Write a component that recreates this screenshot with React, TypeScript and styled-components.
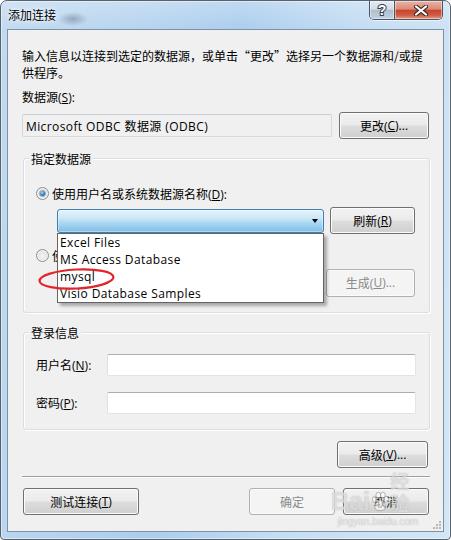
import React from "react";
import styled, { createGlobalStyle } from "styled-components";

const UI = `"Open Sans", "Noto Sans CJK SC", sans-serif`;
const CJK = `"Noto Sans CJK SC", sans-serif`;

const GlobalStyle = createGlobalStyle`
  html, body { margin: 0; padding: 0; background: #ffffff; }
  body { font-family: ${UI}; font-size: 12px; }
  *, *::before, *::after { box-sizing: border-box; }
`;

const Window = styled.div`
  position: relative;
  width: 451px;
  height: 540px;
  display: flex;
  flex-direction: column;
  border: 1px solid #56626e;
  border-radius: 7px 7px 4px 4px;
  overflow: hidden;
  font-family: ${UI};
  font-size: 12px;
  color: #000;
  box-shadow: inset 0 0 0 1px rgba(255, 255, 255, 0.45);
  background:
    radial-gradient(ellipse 15px 7px at 72px 18px, rgba(55, 65, 80, 0.33), rgba(55, 65, 80, 0) 100%),
    linear-gradient(to bottom, rgba(255, 255, 255, 0.25), rgba(255, 255, 255, 0) 30px),
    linear-gradient(100deg, #c2daf0 0%, #b5d3ef 28%, #abcdee 45%, #c6def3 70%, #d2e6f6 100%);
`;

const TitleBar = styled.div`
  height: 28px;
  flex-shrink: 0;
  display: flex;
  align-items: flex-start;
`;

const TitleText = styled.div`
  flex: 1;
  margin-left: 7px;
  line-height: 27px;
  font-family: ${CJK};
  font-size: 12px;
  color: #000;
  text-shadow: 0 0 6px #fff, 0 0 3px rgba(255, 255, 255, 0.9);
`;

const CaptionGroup = styled.div`
  display: flex;
  height: 19px;
  margin-right: 7px;
  border: 1px solid #4b5664;
  border-top: none;
  border-radius: 0 0 5px 5px;
  overflow: hidden;
  box-shadow: 0 1px 0 rgba(255, 255, 255, 0.6);
`;

const CaptionButton = styled.div<{ $kind: "help" | "close" }>`
  width: ${(p) => (p.$kind === "help" ? 25 : 47)}px;
  height: 18px;
  display: flex;
  align-items: center;
  justify-content: center;
  border-right: ${(p) => (p.$kind === "help" ? "1px solid #4b5664" : "none")};
  box-shadow: inset 0 0 0 1px rgba(255, 255, 255, 0.45);
  background: ${(p) =>
    p.$kind === "help"
      ? "linear-gradient(to bottom, #e4ebf2 0%, #d3dde8 45%, #aebfd1 52%, #c2d2e2 100%)"
      : "linear-gradient(to bottom, #ebb3a6 0%, #dc8a77 45%, #c5442d 52%, #cf5b42 78%, #e59a84 100%)"};
`;

const Client = styled.div`
  position: relative;
  flex: 1;
  margin: 0 6px 7px 6px;
  border: 1px solid #7f91a5;
  background: #f0f0f0;
  padding: 17px 13px 0 14px;
  display: flex;
  flex-direction: column;
`;

const Description = styled.div`
  font-family: ${CJK};
  font-size: 12px;
  line-height: 17px;
  width: 408px;
`;

const Label = styled.div<{ $mt?: number }>`
  margin-top: ${(p) => p.$mt ?? 0}px;
  line-height: 17px;
  white-space: nowrap;
`;

const SourceRow = styled.div`
  margin-top: 6px;
  display: flex;
  align-items: center;
  gap: 7px;
  height: 27px;
`;

const ReadOnlyBox = styled.div`
  width: 310px;
  height: 23px;
  border: 1px solid #d6d9dd;
  border-top-color: #c9ccd1;
  border-radius: 2px;
  background: #f0f0f0;
  padding-left: 3px;
  display: flex;
  align-items: center;
  white-space: nowrap;
  letter-spacing: 0.4px;
`;

const Btn = styled.button<{ $w: number; $h?: number }>`
  width: ${(p) => p.$w}px;
  height: ${(p) => p.$h ?? 27}px;
  flex-shrink: 0;
  padding: 0;
  margin: 0;
  font-family: ${UI};
  font-size: 12px;
  color: #000;
  border: 1px solid #707070;
  border-radius: 3px;
  background: linear-gradient(to bottom, #f2f2f2 0%, #ebebeb 48%, #dddddd 52%, #cfcfcf 100%);
  box-shadow: inset 0 0 0 1px #fbfbfb;
  display: flex;
  align-items: center;
  justify-content: center;
  white-space: nowrap;
  &:disabled {
    color: #8a8a8a;
    border-color: #adb2b5;
    background: #f4f4f4;
  }
`;

const Group = styled.div<{ $mt: number; $pb: number }>`
  margin: ${(p) => p.$mt}px 0 0 1px;
  border: 1px solid #d5dfe5;
  border-radius: 3px;
  box-shadow: inset 1px 1px 0 #ffffff, 1px 1px 0 #ffffff;
  padding-bottom: ${(p) => p.$pb}px;
  display: flex;
  flex-direction: column;
`;

const GroupTitle = styled.div`
  align-self: flex-start;
  margin: -9px 0 0 5px;
  padding: 0 2px;
  background: #f0f0f0;
  font-family: ${CJK};
  line-height: 17px;
`;

const RadioRow = styled.div<{ $mt: number }>`
  margin-top: ${(p) => p.$mt}px;
  padding-left: 12px;
  height: 17px;
  display: flex;
  align-items: center;
  gap: 3px;
  white-space: nowrap;
`;

const Radio = styled.span<{ $checked?: boolean }>`
  width: 13px;
  height: 13px;
  border-radius: 50%;
  border: 1px solid #8b8e91;
  background: radial-gradient(circle at 50% 55%, #f4f4f4 0%, #e2e2e2 60%, #cfcfcf 100%);
  box-shadow: inset 0 0 0 1px #f6f6f6;
  display: flex;
  align-items: center;
  justify-content: center;
  flex-shrink: 0;
  &::after {
    content: "";
    width: 5px;
    height: 5px;
    border-radius: 50%;
    display: ${(p) => (p.$checked ? "block" : "none")};
    background: radial-gradient(circle at 40% 35%, #b9e2fb 0%, #3a86c4 45%, #12467a 100%);
    box-shadow: 0 0 0 1px rgba(30, 70, 110, 0.35);
  }
`;

const ComboRow = styled.div<{ $mt: number }>`
  margin-top: ${(p) => p.$mt}px;
  padding-left: 33px;
  height: 27px;
  display: flex;
  align-items: center;
  gap: 6px;
`;

const ComboWrap = styled.div`
  position: relative;
  z-index: 5;
`;

const Combo = styled.div`
  width: 267px;
  height: 24px;
  border: 1px solid #3c7fb1;
  border-radius: 3px;
  background: linear-gradient(to bottom, #e4f3fc 0%, #cde9f8 35%, #a9d6f1 60%, #7fbce6 100%);
  box-shadow: inset 0 0 0 1px rgba(255, 255, 255, 0.4);
  display: flex;
  align-items: center;
  justify-content: flex-end;
`;

const ComboArrow = styled.span`
  width: 0;
  height: 0;
  margin-right: 5px;
  margin-top: 1px;
  border-left: 3px solid transparent;
  border-right: 3px solid transparent;
  border-top: 4px solid #000;
`;

const DropList = styled.div`
  position: absolute;
  top: 100%;
  left: 0;
  width: 267px;
  background: #ffffff;
  border: 1px solid #646464;
  box-shadow: 3px 3px 3px rgba(0, 0, 0, 0.3);
  display: flex;
  flex-direction: column;
`;

const DropItem = styled.div`
  height: 17px;
  line-height: 18px;
  padding-left: 2px;
  white-space: nowrap;
  letter-spacing: 0.4px;
`;

const HiddenField = styled.div`
  width: 263px;
  height: 23px;
  border: 1px solid #d6d9dd;
  border-radius: 2px;
  background: #f0f0f0;
`;

const FieldRow = styled.div<{ $mt: number }>`
  margin-top: ${(p) => p.$mt}px;
  padding-left: 12px;
  height: 22px;
  display: flex;
  align-items: center;
`;

const FieldLabel = styled.div`
  width: 71px;
  flex-shrink: 0;
  white-space: nowrap;
  line-height: 17px;
`;

const TextBox = styled.div`
  width: 309px;
  height: 22px;
  border: 1px solid #e2e3ea;
  border-top-color: #abadb3;
  border-left-color: #dbdfe6;
  border-radius: 2px;
  background: #ffffff;
`;

const AdvancedRow = styled.div`
  margin-top: 11px;
  display: flex;
  justify-content: flex-end;
  padding-right: 2px;
`;

const Separator = styled.div`
  margin-top: 8px;
  height: 2px;
  border-top: 1px solid #a0a0a0;
  border-bottom: 1px solid #ffffff;
`;

const BottomRow = styled.div`
  margin-top: 10px;
  padding: 0 1px;
  display: flex;
  justify-content: space-between;
`;

const BottomRight = styled.div`
  display: flex;
  gap: 8px;
`;

const Grip = styled.svg`
  position: absolute;
  right: 1px;
  bottom: 1px;
`;

const Annotation = styled.svg`
  position: absolute;
  left: 35px;
  top: 265px;
  z-index: 20;
  pointer-events: none;
`;

const Watermark = styled.div`
  position: absolute;
  left: 330px;
  top: 488px;
  width: 94px;
  z-index: 20;
  display: flex;
  flex-direction: column;
  align-items: center;
  pointer-events: none;
  color: rgba(255, 255, 255, 0.6);
  text-shadow: 0 0 1px rgba(110, 110, 110, 0.55);
`;

const WmTop = styled.div`
  display: flex;
  align-items: flex-end;
  height: 25px;
`;

const WmLatin = styled.span`
  font-family: "Liberation Sans", sans-serif;
  font-weight: bold;
  font-size: 25px;
  line-height: 25px;
`;

const WmCjk = styled.span`
  font-family: ${CJK};
  font-weight: bold;
  font-size: 19px;
  line-height: 22px;
`;

const WmUrl = styled.div`
  margin-top: 3px;
  font-family: "Liberation Sans", sans-serif;
  font-size: 10px;
  line-height: 10px;
`;

function HelpGlyph() {
  return (
    <svg width="12" height="14" viewBox="0 0 12 14">
      <text
        x="6"
        y="12"
        textAnchor="middle"
        fontFamily="Liberation Sans, sans-serif"
        fontWeight="bold"
        fontSize="14"
        fill="#ffffff"
        stroke="#35404c"
        strokeWidth="2"
        paintOrder="stroke"
      >
        ?
      </text>
    </svg>
  );
}

function CloseGlyph() {
  return (
    <svg width="14" height="11" viewBox="0 0 14 11" style={{ marginLeft: 4 }}>
      <path d="M2 1.5 L12 9.5 M12 1.5 L2 9.5" stroke="#3a2b28" strokeWidth="4.2" strokeLinecap="round" />
      <path d="M2 1.5 L12 9.5 M12 1.5 L2 9.5" stroke="#ffffff" strokeWidth="2.2" strokeLinecap="round" />
    </svg>
  );
}

function Paw() {
  return (
    <svg width="20" height="22" viewBox="0 0 20 22" style={{ margin: "0 1px 1px" }}>
      <g fill="rgba(255,255,255,0.6)" stroke="rgba(110,110,110,0.5)" strokeWidth="1">
        <ellipse cx="4" cy="8" rx="2.6" ry="3.2" />
        <ellipse cx="8" cy="3.5" rx="2.6" ry="3.2" />
        <ellipse cx="13" cy="3.5" rx="2.6" ry="3.2" />
        <ellipse cx="16.5" cy="8" rx="2.6" ry="3.2" />
        <path d="M10 9 C5 9 3 16 5 19 C7 21 13 21 15 19 C17 16 15 9 10 9 Z" />
      </g>
    </svg>
  );
}

export default function App() {
  return (
    <>
      <GlobalStyle />
      <Window>
        <TitleBar>
          <TitleText>添加连接</TitleText>
          <CaptionGroup>
            <CaptionButton $kind="help">
              <HelpGlyph />
            </CaptionButton>
            <CaptionButton $kind="close">
              <CloseGlyph />
            </CaptionButton>
          </CaptionGroup>
        </TitleBar>

        <Client>
          <Description>
            输入信息以连接到选定的数据源，或单击“更改”选择另一个数据源和/或提供程序。
          </Description>

          <Label $mt={8}>
            数据源(<u>S</u>):
          </Label>
          <SourceRow>
            <ReadOnlyBox>Microsoft ODBC 数据源 (ODBC)</ReadOnlyBox>
            <Btn $w={90}>
              更改(<u>C</u>)...
            </Btn>
          </SourceRow>

          <Group $mt={19} $pb={16}>
            <GroupTitle>指定数据源</GroupTitle>
            <RadioRow $mt={18}>
              <Radio $checked />
              <span>
                使用用户名或系统数据源名称(<u>D</u>):
              </span>
            </RadioRow>
            <ComboRow $mt={5}>
              <ComboWrap>
                <Combo>
                  <ComboArrow />
                </Combo>
                <DropList>
                  <DropItem>Excel Files</DropItem>
                  <DropItem>MS Access Database</DropItem>
                  <DropItem>mysql</DropItem>
                  <DropItem>Visio Database Samples</DropItem>
                </DropList>
              </ComboWrap>
              <Btn $w={85}>
                刷新(<u>R</u>)
              </Btn>
            </ComboRow>
            <RadioRow $mt={13}>
              <Radio />
              <span>使用连接字符串</span>
            </RadioRow>
            <ComboRow $mt={5}>
              <HiddenField />
              <Btn $w={89} $h={28} disabled>
                生成(<u>U</u>)...
              </Btn>
            </ComboRow>
          </Group>

          <Group $mt={19} $pb={15}>
            <GroupTitle>登录信息</GroupTitle>
            <FieldRow $mt={13}>
              <FieldLabel>
                用户名(<u>N</u>):
              </FieldLabel>
              <TextBox />
            </FieldRow>
            <FieldRow $mt={16}>
              <FieldLabel>
                密码(<u>P</u>):
              </FieldLabel>
              <TextBox />
            </FieldRow>
          </Group>

          <AdvancedRow>
            <Btn $w={91}>
              高级(<u>V</u>)...
            </Btn>
          </AdvancedRow>

          <Separator />

          <BottomRow>
            <Btn $w={116}>
              测试连接(<u>T</u>)
            </Btn>
            <BottomRight>
              <Btn $w={86} disabled>
                确定
              </Btn>
              <Btn $w={86}>取消</Btn>
            </BottomRight>
          </BottomRow>

          <Grip width="10" height="10" viewBox="0 0 10 10">
            <g fill="#b8b8b8">
              <rect x="7" y="1" width="2" height="2" />
              <rect x="4" y="4" width="2" height="2" />
              <rect x="7" y="4" width="2" height="2" />
              <rect x="1" y="7" width="2" height="2" />
              <rect x="4" y="7" width="2" height="2" />
              <rect x="7" y="7" width="2" height="2" />
            </g>
          </Grip>
        </Client>

        <Annotation width="82" height="26" viewBox="0 0 82 26">
          <ellipse
            cx="40.5"
            cy="13"
            rx="37"
            ry="9.5"
            fill="none"
            stroke="#e3242b"
            strokeWidth="2.2"
            transform="rotate(-3 40.5 13)"
          />
        </Annotation>

        <Watermark>
          <WmTop>
            <WmLatin>Bai</WmLatin>
            <Paw />
            <WmCjk>经验</WmCjk>
          </WmTop>
          <WmUrl>jingyan.baidu.com</WmUrl>
        </Watermark>
      </Window>
    </>
  );
}
